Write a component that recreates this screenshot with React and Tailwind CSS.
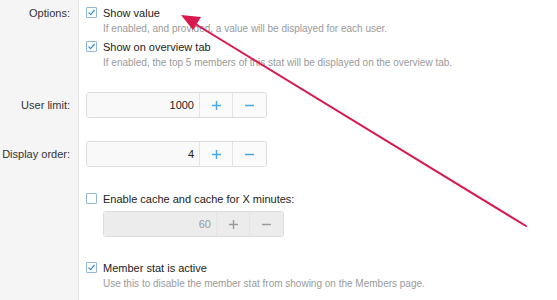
import React from 'react';

const Check = ({ checked }) => (
    <span className="w-[11px] h-[11px] mt-[2px] shrink-0 border border-[#8fb8da] bg-white flex items-center justify-center rounded-[1px]">
        {checked && (
            <svg width="9" height="9" viewBox="0 0 9 9">
                <path d="M1.5 4.6 L3.6 6.6 L7.6 2" fill="none" stroke="#3d8fd1" strokeWidth="1.3" />
            </svg>
        )}
    </span>
);

const Option = ({ checked, label, hint }) => (
    <div className="flex gap-[6px]">
        <Check checked={checked} />
        <div>
            <div className="text-[11px] leading-[16px] text-[#222] whitespace-nowrap">{label}</div>
            {hint && <div className="text-[10px] leading-[14px] text-[#9a9a9a] mt-[1px] whitespace-nowrap">{hint}</div>}
        </div>
    </div>
);

const Sign = ({ minus, disabled }) => (
    <svg width="11" height="11" viewBox="0 0 11 11">
        <path d={minus ? 'M1 5.5 H10' : 'M1 5.5 H10 M5.5 1 V10'} stroke={disabled ? '#9a9a9a' : '#47a7eb'} strokeWidth="1.4" />
    </svg>
);

const Spinbox = ({ value, disabled }) => (
    <div className="flex w-[181px] h-[26px] border border-[#dcdcdc] rounded-[3px] overflow-hidden">
        <div className={`flex-1 flex items-center justify-end pr-[5px] text-[11px] ${disabled ? 'bg-[#ececec] text-[#999]' : 'bg-[#f9f9f9] text-[#222]'}`}>{value}</div>
        <div className={`w-[33px] flex items-center justify-center border-l border-[#e4e4e4] ${disabled ? 'bg-[#ececec]' : 'bg-[#fbfbfb]'}`}><Sign disabled={disabled} /></div>
        <div className={`w-[34px] flex items-center justify-center border-l border-[#e4e4e4] ${disabled ? 'bg-[#ececec]' : 'bg-[#fbfbfb]'}`}><Sign minus disabled={disabled} /></div>
    </div>
);

const Row = ({ label, top, children, className }) => (
    <div className={`flex ${className || ''}`}>
        <div className="w-[79px] shrink-0 bg-[#f5f5f5] border-r border-[#e6e6e6] flex justify-end pr-[8px]">
            {label && <div className={`${top} text-[11px] text-[#333] whitespace-nowrap`}>{label}</div>}
        </div>
        <div className="flex-1 pl-[7px]">{children}</div>
    </div>
);

export default function App() {
    return (
        <div className="relative w-[557px] h-[300px] overflow-hidden bg-white font-['Liberation_Sans',Arial,sans-serif]">
            <div className="flex flex-col h-full">
                <Row label="Options:" top="pt-[5px] leading-[16px]">
                    <div className="pt-[5px] flex flex-col gap-[3px]">
                        <Option checked label="Show value" hint="If enabled, and provided, a value will be displayed for each user." />
                        <Option checked label="Show on overview tab" hint="If enabled, the top 5 members of this stat will be displayed on the overview tab." />
                    </div>
                </Row>
                <Row label="User limit:" top="pt-[22px] leading-[26px]">
                    <div className="pt-[22px]"><Spinbox value="1000" /></div>
                </Row>
                <Row label="Display order:" top="pt-[23px] leading-[26px]">
                    <div className="pt-[23px]"><Spinbox value="4" /></div>
                </Row>
                <Row>
                    <div className="pt-[24px]">
                        <Option label="Enable cache and cache for X minutes:" />
                        <div className="pl-[17px] mt-[4px]"><Spinbox value="60" disabled /></div>
                    </div>
                </Row>
                <Row className="flex-1">
                    <div className="pt-[23px]">
                        <Option checked label="Member stat is active" hint="Use this to disable the member stat from showing on the Members page." />
                    </div>
                </Row>
            </div>
            <svg className="absolute inset-0 pointer-events-none" width="557" height="300">
                <line x1="526" y1="226" x2="192" y2="22" stroke="#d8194f" strokeWidth="2" strokeLinecap="round" />
                <polygon points="181,15 201,17 193,30" fill="#d8194f" />
            </svg>
        </div>
    );
}
